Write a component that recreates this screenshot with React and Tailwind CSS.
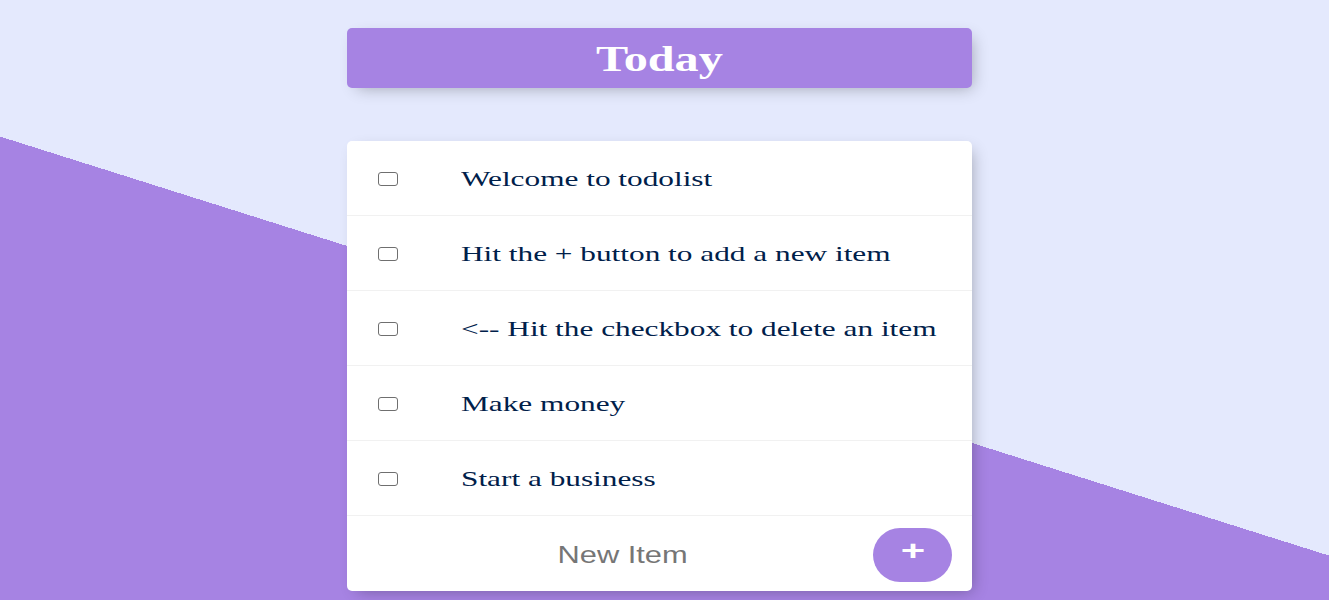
import React from "react";

const items = [
  "Welcome to todolist",
  "Hit the + button to add a new item",
  "<-- Hit the checkbox to delete an item",
  "Make money",
  "Start a business",
];

const App = () => {
  return (
    <div className="h-screen w-full overflow-hidden bg-[#E4E9FD] bg-[linear-gradient(17.5deg,#A683E3_442px,#E4E9FD_442px)] pr-[10px] font-['Liberation_Serif',serif]">
      <div className="mx-auto w-[625px] pt-[28px]">
        <div className="flex h-[60px] items-center justify-center rounded-[5px] bg-[#A683E3] shadow-[5px_5px_15px_-5px_rgba(0,0,0,0.3)]">
          <h1 className="mt-[1px] inline-block origin-center scale-x-[1.34] text-[36px] font-bold leading-none text-white">Today</h1>
        </div>

        <div className="mt-[53px] overflow-hidden rounded-[5px] bg-white shadow-[5px_5px_15px_-5px_rgba(0,0,0,0.3)]">
          {items.map((item) => (
            <div key={item} className="flex h-[75px] items-center border-b border-[#F1F1F1]">
              <div className="ml-[31px] mt-[1px] h-[14px] w-[20px] shrink-0 rounded-[3px] border border-[#6f6f6f] bg-white" />
              <p className="ml-[63px] mt-[4px] inline-block origin-left scale-x-[1.49] whitespace-nowrap text-[21px] text-[#00204a]">{item}</p>
            </div>
          ))}

          <div className="flex h-[75px] items-center pl-[31px]">
            <div className="mt-[3px] flex w-[489px] justify-center">
              <span className="inline-block origin-center scale-x-[1.34] font-['Liberation_Sans',sans-serif] text-[23px] text-[#767676]">New Item</span>
            </div>
            <button
              type="button"
              className="ml-[6px] mt-[2px] flex h-[54px] w-[79px] items-center justify-center rounded-full bg-[#A683E3] pb-[6px] font-['Liberation_Sans',sans-serif] text-white"
            >
              <span className="inline-block scale-x-[1.55] text-[27px] font-bold leading-none">+</span>
            </button>
          </div>
        </div>
      </div>
    </div>
  );
};

export default App;
